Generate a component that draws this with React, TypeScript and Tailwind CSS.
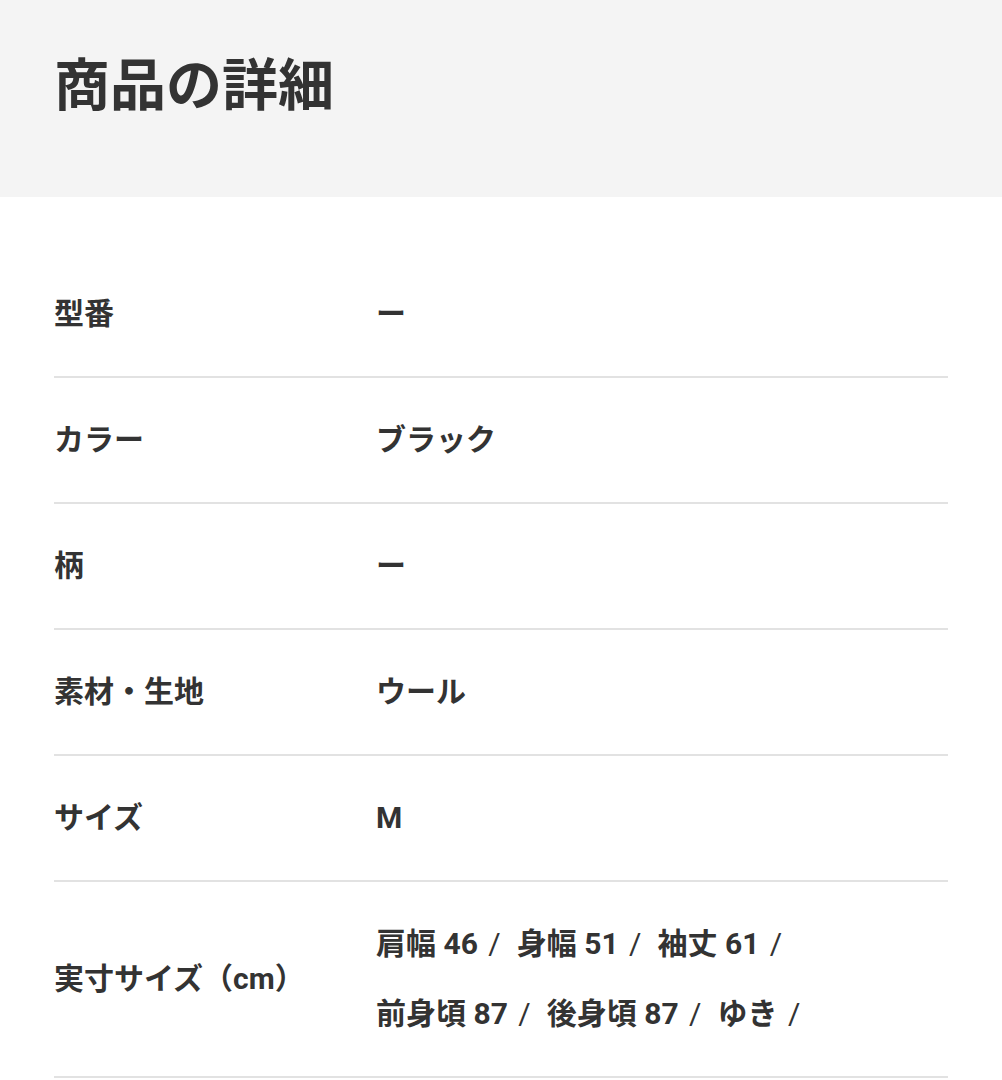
const rows: { label: string; value: string[][] }[] = [
  { label: '型番', value: [['ー']] },
  { label: 'カラー', value: [['ブラック']] },
  { label: '柄', value: [['ー']] },
  { label: '素材・生地', value: [['ウール']] },
  { label: 'サイズ', value: [['M']] },
  {
    label: '実寸サイズ（cm）',
    value: [
      ['肩幅 46', '身幅 51', '袖丈 61'],
      ['前身頃 87', '後身頃 87', 'ゆき'],
    ],
  },
];

export default function App() {
  return (
    <div
      className="min-h-screen bg-white text-[#333]"
      style={{ fontFamily: 'Roboto, "Noto Sans CJK JP", sans-serif' }}
    >
      {/* Header */}
      <div className="h-[197px] bg-[#f4f4f4] px-[54px] pt-[54px]">
        <h1 className="text-[56px] font-bold leading-[64px]">商品の詳細</h1>
      </div>

      {/* Detail list */}
      <div className="mx-[54px] mt-[55px] w-[894px]">
        {rows.map((row) => (
          <div
            key={row.label}
            className="flex items-center border-b-2 border-[#e2e2e2] py-[27px] text-[30px] font-bold"
          >
            <div className="w-[322px] shrink-0 leading-[70px]">{row.label}</div>
            <div className="leading-[70px]">
              {row.value.map((line, i) => (
                <div key={i}>
                  {line.length === 1 && row.value.length === 1
                    ? line[0]
                    : line.map((part) => (
                        <span key={part} className="mr-[16px]">
                          {part} <span className="ml-[3px] font-normal">/</span>
                        </span>
                      ))}
                </div>
              ))}
            </div>
          </div>
        ))}
      </div>
    </div>
  );
}
